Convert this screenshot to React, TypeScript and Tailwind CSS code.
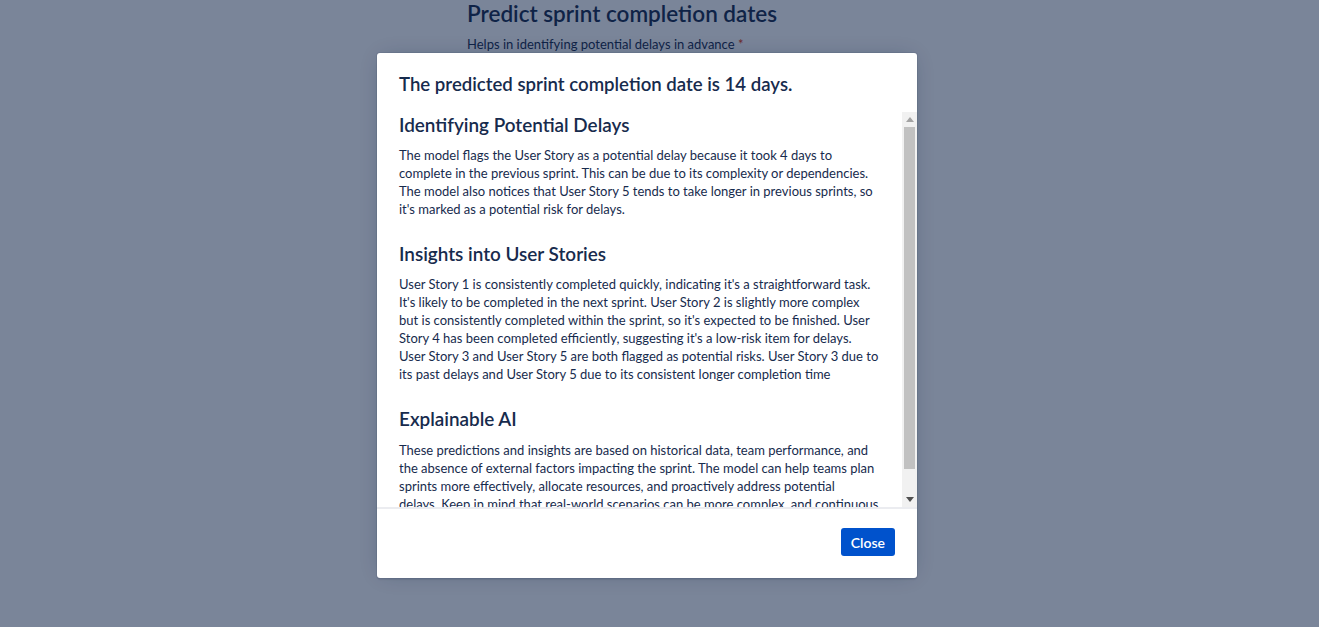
import React from "react";

const font = { fontFamily: '"Lato", "Noto Sans", sans-serif' };

function Lines({ lines, className }: { lines: string[]; className: string }) {
  return (
    <p className={className}>
      {lines.map((l, i) => (
        <React.Fragment key={i}>
          {l}
          {i < lines.length - 1 && <br />}
        </React.Fragment>
      ))}
    </p>
  );
}

const p1 = [
  "The model flags the User Story as a potential delay because it took 4 days to",
  "complete in the previous sprint. This can be due to its complexity or dependencies.",
  "The model also notices that User Story 5 tends to take longer in previous sprints, so",
  "it's marked as a potential risk for delays.",
];

const p2 = [
  "User Story 1 is consistently completed quickly, indicating it's a straightforward task.",
  "It's likely to be completed in the next sprint. User Story 2 is slightly more complex",
  "but is consistently completed within the sprint, so it's expected to be finished. User",
  "Story 4 has been completed efficiently, suggesting it's a low-risk item for delays.",
  "User Story 3 and User Story 5 are both flagged as potential risks. User Story 3 due to",
  "its past delays and User Story 5 due to its consistent longer completion time",
];

const p3 = [
  "These predictions and insights are based on historical data, team performance, and",
  "the absence of external factors impacting the sprint. The model can help teams plan",
  "sprints more effectively, allocate resources, and proactively address potential",
  "delays. Keep in mind that real-world scenarios can be more complex, and continuous",
  "monitoring and adjustments are essential.",
];

export default function App() {
  return (
    <div className="relative h-[627px] w-full overflow-hidden bg-white text-[#172b4d]" style={font}>
      <div className="flex flex-col pl-[467px]">
        <h1 className="text-[22.5px] font-semibold leading-[28px]">Predict sprint completion dates</h1>
        <p className="mt-[8px] text-[13px] leading-[16px]">
          Helps in identifying potential delays in advance <span className="text-[#de350b]">*</span>
        </p>
      </div>
      <div className="absolute inset-0 flex items-start justify-start bg-[rgba(9,30,66,0.54)] pl-[377px] pt-[53px]">
        <div className="flex h-[525px] w-[540px] flex-col rounded-[3px] bg-white shadow-[0_0_0_1px_rgba(9,30,66,0.08),0_2px_1px_rgba(9,30,66,0.08),0_0_20px_-6px_rgba(9,30,66,0.31)]">
          <div className="px-[22px] pb-[16px] pt-[19px]">
            <h2 className="text-[18.6px] font-semibold leading-[24px]">The predicted sprint completion date is 14 days.</h2>
          </div>
          <div className="flex min-h-0 flex-1 border-b-2 border-[#ebecf0]">
            <div className="min-w-0 flex-1 overflow-hidden pl-[22px] pr-[6px]">
              <h3 className="mt-px text-[18.9px] font-semibold leading-[24px]">Identifying Potential Delays</h3>
              <Lines lines={p1} className="mt-[9px] whitespace-nowrap text-[13px] leading-[18px]" />
              <h3 className="mt-[24px] text-[18.9px] font-semibold leading-[24px]">Insights into User Stories</h3>
              <Lines lines={p2} className="mt-[9px] whitespace-nowrap text-[13px] leading-[18px]" />
              <h3 className="mt-[24px] text-[18.9px] font-semibold leading-[24px]">Explainable AI</h3>
              <Lines lines={p3} className="mb-[2px] mt-[10px] whitespace-nowrap text-[13px] leading-[18px]" />
            </div>
            <div className="flex w-[15px] shrink-0 flex-col bg-[#f1f1f1]">
              <div className="flex h-[15px] items-center justify-center">
                <svg width="8" height="5" viewBox="0 0 8 5"><path d="M4 0 L8 5 L0 5 Z" fill="#a3a3a3" /></svg>
              </div>
              <div className="mx-[2px] h-[342px] bg-[#c1c1c1]" />
              <div className="flex-1" />
              <div className="flex h-[15px] items-center justify-center">
                <svg width="8" height="5" viewBox="0 0 8 5"><path d="M0 0 L8 0 L4 5 Z" fill="#505050" /></svg>
              </div>
            </div>
          </div>
          <div className="flex justify-end px-[22px] pb-[22px] pt-[19px]">
            <button className="h-[28px] rounded-[3px] bg-[#0052cc] px-[10px] text-[14px] font-semibold text-white">Close</button>
          </div>
        </div>
      </div>
    </div>
  );
}
